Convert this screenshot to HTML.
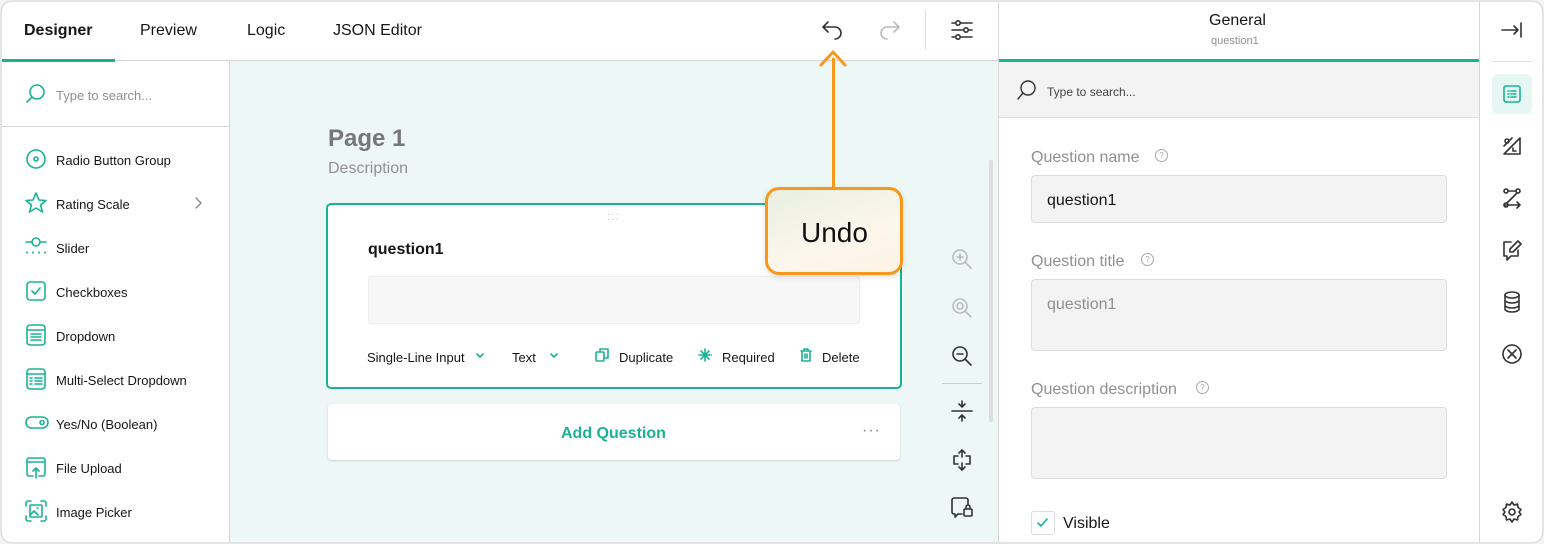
<!DOCTYPE html>
<html><head><meta charset="utf-8"><style>
*{box-sizing:border-box;margin:0;padding:0}
body{width:1544px;height:544px;background:#f3f3f3;font-family:"Liberation Sans","DejaVu Sans",sans-serif;position:relative;overflow:hidden}
.frame{position:absolute;left:0;top:0;width:1544px;height:544px;border-radius:12px;background:#fff;overflow:hidden}
.bord{position:absolute;left:0;top:0;width:1544px;height:544px;border:2px solid #e4e4e4;border-radius:12px;pointer-events:none}
.a{position:absolute}
.t{position:absolute;white-space:nowrap;color:#161616;transform:translateY(2px)}
svg{position:absolute;fill:none;stroke-linecap:round;stroke-linejoin:round}
.g{stroke:#19b394;stroke-width:1.6}
.k{stroke:#333;stroke-width:1.6}
.l{stroke:#bbb;stroke-width:1.6}
.item{position:absolute;left:56px;font-size:13px;color:#161616;transform:translateY(2px)}
</style></head><body><div class="frame">
<div class="a" style="left:0;top:60px;width:1479px;height:1px;background:#d6d6d6"></div>
<div class="a" style="left:0;top:59px;width:115px;height:3px;background:#19b394"></div>
<div class="t" style="left:24px;top:20px;font-size:16px;font-weight:bold">Designer</div>
<div class="t" style="left:140px;top:20px;font-size:16px">Preview</div>
<div class="t" style="left:247px;top:20px;font-size:16px">Logic</div>
<div class="t" style="left:333px;top:20px;font-size:16px">JSON Editor</div>
<svg style="left:820px;top:18px" width="26" height="24" class="k"><path d="M8 4 L3 9 L8 14 M3 9 H15 A6 6 0 0 1 15 21"/></svg>
<svg style="left:876px;top:18px" width="26" height="24" class="l"><path d="M18 4 L23 9 L18 14 M23 9 H11 A6 6 0 0 0 11 21"/></svg>
<div class="a" style="left:925px;top:10px;width:1px;height:40px;background:#ddd"></div>
<svg style="left:950px;top:18px" width="24" height="24" class="k"><path d="M2 5H22M2 12H22M2 19H22"/><circle cx="8" cy="5" r="2.2" fill="#fff"/><circle cx="16" cy="12" r="2.2" fill="#fff"/><circle cx="8" cy="19" r="2.2" fill="#fff"/></svg>
<div class="a" style="left:229px;top:61px;width:1px;height:483px;background:#d6d6d6"></div>
<div class="a" style="left:0;top:126px;width:229px;height:1px;background:#d6d6d6"></div>
<svg style="left:24px;top:82px" width="24" height="24" class="g"><circle cx="13" cy="10" r="7"/><path d="M8 15 L3 20"/></svg>
<div class="t" style="left:56px;top:86px;font-size:13px;color:#909090">Type to search...</div>
<svg style="left:25px;top:148px" width="22" height="22" class="g"><circle cx="11" cy="11" r="9"/><circle cx="11" cy="11" r="2"/></svg>
<div class="item" style="top:151px">Radio Button Group</div>
<svg style="left:24px;top:191px" width="24" height="24" class="g"><path d="M12 2L15 9L22 9.5L16.5 14L18.5 21L12 17L5.5 21L7.5 14L2 9.5L9 9Z"/></svg>
<div class="item" style="top:195px">Rating Scale</div>
<svg style="left:192px;top:196px" width="12" height="14" stroke="#888" stroke-width="1.3"><path d="M4 2L9 7L4 12"/></svg>
<svg style="left:24px;top:236px" width="24" height="22" class="g"><path d="M2 6H8M16 6H22"/><circle cx="12" cy="6" r="4"/><path d="M3 16v1M9 16v1M15 16v1M21 16v1"/></svg>
<div class="item" style="top:239px">Slider</div>
<svg style="left:25px;top:280px" width="22" height="22" class="g"><rect x="2" y="2" width="18" height="18" rx="3"/><path d="M7 11L10 14L15 8"/></svg>
<div class="item" style="top:283px">Checkboxes</div>
<svg style="left:25px;top:324px" width="22" height="22" class="g"><rect x="2" y="1" width="18" height="20" rx="3"/><path d="M2 6H20M6 10H16M6 13H16M6 16H16"/></svg>
<div class="item" style="top:327px">Dropdown</div>
<svg style="left:25px;top:368px" width="22" height="22" class="g"><rect x="2" y="1" width="18" height="20" rx="3"/><path d="M2 6H20M5 10H7M10 10H17M5 13H7M10 13H17M5 16H7M10 16H17"/></svg>
<div class="item" style="top:371px">Multi-Select Dropdown</div>
<svg style="left:24px;top:413px" width="26" height="20" class="g"><rect x="2" y="4" width="22" height="11" rx="5.5"/><circle cx="18" cy="9.5" r="2"/></svg>
<div class="item" style="top:415px">Yes/No (Boolean)</div>
<svg style="left:25px;top:456px" width="22" height="24" class="g"><path d="M8 20H4a2 2 0 0 1-2-2V4a2 2 0 0 1 2-2h14a2 2 0 0 1 2 2v14a2 2 0 0 1-2 2h-4M2 6H20M11 22V12M8 15L11 12L14 15"/></svg>
<div class="item" style="top:459px">File Upload</div>
<svg style="left:24px;top:499px" width="24" height="24" class="g"><path d="M2 7V4a2 2 0 0 1 2-2h3M17 2h3a2 2 0 0 1 2 2v3M22 17v3a2 2 0 0 1-2 2h-3M7 22H4a2 2 0 0 1-2-2v-3"/><rect x="6" y="6" width="12" height="12" rx="1"/><path d="M6 16L10 12L14 16M13 9h1"/></svg>
<div class="item" style="top:503px">Image Picker</div>
<div class="a" style="left:230px;top:61px;width:768px;height:483px;background:#edf7f5"></div>
<div class="a" style="left:998px;top:0;width:1px;height:544px;background:#d6d6d6"></div>
<div class="t" style="left:328px;top:123px;font-size:24px;font-weight:bold;color:#777">Page 1</div>
<div class="t" style="left:328px;top:158px;font-size:16px;color:#909090">Description</div>
<div class="a" style="left:326px;top:203px;width:576px;height:186px;background:#fff;border:2px solid #19b394;border-radius:5px"></div>
<div class="t" style="left:607px;top:210px;font-size:10px;color:#bbb;letter-spacing:1px;line-height:5px">···<br>···</div>
<div class="t" style="left:368px;top:239px;font-size:16px;font-weight:bold">question1</div>
<div class="a" style="left:368px;top:276px;width:492px;height:48px;background:#f7f7f7;border:1px solid #eee;border-radius:3px"></div>
<div class="t" style="left:367px;top:348px;font-size:13px">Single-Line Input</div>
<svg style="left:474px;top:350px" width="12" height="12" class="g"><path d="M3 4L6 7L9 4"/></svg>
<div class="t" style="left:512px;top:348px;font-size:13px">Text</div>
<svg style="left:548px;top:350px" width="12" height="12" class="g"><path d="M3 4L6 7L9 4"/></svg>
<svg style="left:594px;top:347px" width="16" height="16" class="g"><rect x="2" y="5" width="8" height="9" rx="1"/><path d="M6 5V2h8v9h-4"/></svg>
<div class="t" style="left:619px;top:348px;font-size:13px">Duplicate</div>
<svg style="left:697px;top:347px" width="16" height="16" class="g"><path d="M8 2V14M2 8H14M4 4L12 12M12 4L4 12"/></svg>
<div class="t" style="left:722px;top:348px;font-size:13px">Required</div>
<svg style="left:798px;top:347px" width="16" height="16" class="g"><path d="M3 4H13M6 4V2H10V4M4 4V14H12V4M7 7V11M9 7V11"/></svg>
<div class="t" style="left:822px;top:348px;font-size:13px">Delete</div>
<div class="a" style="left:328px;top:404px;width:572px;height:56px;background:#fff;border-radius:4px;box-shadow:0 1px 2px rgba(0,0,0,.15)"></div>
<div class="t" style="left:561px;top:423px;font-size:16px;font-weight:bold;color:#19b394">Add Question</div>
<div class="t" style="left:862px;top:420px;font-size:16px;color:#888;letter-spacing:1px">···</div>
<svg style="left:950px;top:247px" width="24" height="24" class="l"><circle cx="10" cy="10" r="7"/><path d="M15 15L21 21M10 7V13M7 10H13"/></svg>
<svg style="left:950px;top:296px" width="24" height="24" class="l"><circle cx="10" cy="10" r="7"/><path d="M15 15L21 21"/><circle cx="10" cy="10" r="3"/></svg>
<svg style="left:950px;top:344px" width="24" height="24" class="k"><circle cx="10" cy="10" r="7"/><path d="M15 15L21 21M7 10H13"/></svg>
<div class="a" style="left:942px;top:383px;width:40px;height:1px;background:#ccc"></div>
<svg style="left:950px;top:399px" width="24" height="24" class="k"><path d="M2 12H22M12 2V8M9 5L12 8L15 5M12 22V16M9 19L12 16L15 19"/></svg>
<svg style="left:950px;top:448px" width="24" height="24" class="k"><path d="M12 2V9M9 5L12 2L15 5M12 22V15M9 19L12 22L15 19M8 8H4V16H8M16 8H20V16H16"/></svg>
<svg style="left:950px;top:496px" width="26" height="24" class="k"><path d="M12 18H8L5 21V18H4a2 2 0 0 1-2-2V4a2 2 0 0 1 2-2h12a2 2 0 0 1 2 2v4"/><rect x="14" y="13" width="8" height="7" rx="1"/><path d="M16 13V11a2 2 0 0 1 4 0v2"/></svg>
<div class="a" style="left:989px;top:160px;width:4px;height:262px;background:#ddd;border-radius:2px"></div>
<div class="a" style="left:832px;top:58px;width:3px;height:130px;background:#f7981d"></div>
<svg style="left:818px;top:49px" width="32" height="20" stroke="#f7981d" stroke-width="3"><path d="M3 16L15 3L27 16"/></svg>
<div class="a" style="left:765px;top:187px;width:138px;height:88px;border:3px solid #f7981d;border-radius:14px;background:linear-gradient(160deg,#e8efe0,#fdf6ec 60%,#fdf3e6);box-shadow:0 2px 6px rgba(0,0,0,.12)"></div>
<div class="t" style="left:801px;top:215px;font-size:28px;color:#111">Undo</div>
<div class="t" style="left:1209px;top:10px;font-size:16px">General</div>
<div class="t" style="left:1211px;top:33px;font-size:11px;color:#909090">question1</div>
<div class="a" style="left:999px;top:59px;width:480px;height:3px;background:#19b394"></div>
<div class="a" style="left:999px;top:62px;width:480px;height:56px;background:#f3f3f3;border-bottom:1px solid #ddd"></div>
<svg style="left:1015px;top:78px" width="24" height="24" stroke="#333" stroke-width="1.4"><circle cx="13" cy="10" r="7"/><path d="M8 15L3 21"/></svg>
<div class="t" style="left:1047px;top:83px;font-size:12px;color:#444">Type to search...</div>
<div class="t" style="left:1031px;top:147px;font-size:16px;color:#909090">Question name</div>
<div class="a" style="left:1155px;top:149px;width:13px;height:13px;border:1px solid #aaa;border-radius:50%;font-size:8px;color:#aaa;text-align:center;line-height:11px">?</div>
<div class="a" style="left:1031px;top:175px;width:416px;height:48px;background:#f3f3f3;border:1px solid #ddd;border-radius:4px"></div>
<div class="t" style="left:1047px;top:190px;font-size:16px">question1</div>
<div class="t" style="left:1031px;top:251px;font-size:16px;color:#909090">Question title</div>
<div class="a" style="left:1141px;top:253px;width:13px;height:13px;border:1px solid #aaa;border-radius:50%;font-size:8px;color:#aaa;text-align:center;line-height:11px">?</div>
<div class="a" style="left:1031px;top:279px;width:416px;height:72px;background:#f3f3f3;border:1px solid #ddd;border-radius:4px"></div>
<div class="t" style="left:1047px;top:294px;font-size:16px;color:#909090">question1</div>
<div class="t" style="left:1031px;top:379px;font-size:16px;color:#909090">Question description</div>
<div class="a" style="left:1196px;top:381px;width:13px;height:13px;border:1px solid #aaa;border-radius:50%;font-size:8px;color:#aaa;text-align:center;line-height:11px">?</div>
<div class="a" style="left:1031px;top:407px;width:416px;height:72px;background:#f3f3f3;border:1px solid #ddd;border-radius:4px"></div>
<div class="a" style="left:1031px;top:511px;width:24px;height:24px;border:1px solid #ddd;border-radius:3px;background:#fff"></div>
<svg style="left:1035px;top:515px" width="16" height="16" class="g"><path d="M3 8L6 11L12 4"/></svg>
<div class="t" style="left:1063px;top:513px;font-size:16px">Visible</div>
<div class="a" style="left:1479px;top:0;width:1px;height:544px;background:#d6d6d6"></div>
<svg style="left:1500px;top:18px" width="24" height="24" class="k"><path d="M2 12H18M14 8L18 12L14 16M21 5V19"/></svg>
<div class="a" style="left:1492px;top:61px;width:40px;height:1px;background:#ddd"></div>
<div class="a" style="left:1492px;top:74px;width:40px;height:40px;background:#e6f7f3;border-radius:6px"></div>
<svg style="left:1502px;top:84px" width="20" height="20" class="g"><rect x="2" y="2" width="16" height="16" rx="2"/><path d="M6 7h1M9 7h5M6 10h1M9 10h5M6 13h1M9 13h5"/></svg>
<svg style="left:1500px;top:134px" width="24" height="24" class="k"><path d="M4 20L20 4V20Z M13 14v3h3"/><circle cx="7" cy="7" r="2"/><path d="M4 12L12 4"/></svg>
<svg style="left:1500px;top:186px" width="24" height="24" class="k"><circle cx="6" cy="5" r="2"/><circle cx="18" cy="5" r="2"/><path d="M8 5H16M17 7L7 17M4 19H20M17 16L20 19L17 22"/><circle cx="6" cy="19" r="2"/></svg>
<svg style="left:1500px;top:238px" width="24" height="24" class="k"><path d="M11 4H4V18H7V22L11 18H18V12"/><path d="M18 3L21 6L13 14H10V11Z"/></svg>
<svg style="left:1500px;top:290px" width="24" height="24" class="k"><ellipse cx="12" cy="5" rx="7" ry="3"/><path d="M5 5V19c0 1.7 3.1 3 7 3s7-1.3 7-3V5M5 10c0 1.7 3.1 3 7 3s7-1.3 7-3M5 15c0 1.7 3.1 3 7 3s7-1.3 7-3"/></svg>
<svg style="left:1500px;top:342px" width="24" height="24" class="k"><circle cx="12" cy="12" r="9"/><path d="M8 8L16 16M16 8L8 16"/></svg>
<svg style="left:1500px;top:500px" width="24" height="24" class="k"><circle cx="12" cy="12" r="3"/><path d="M12 2l2 3 3.5-1 .5 3.5 3 2-2 2.5 2 2.5-3 2-.5 3.5-3.5-1-2 3-2-3-3.5 1-.5-3.5-3-2 2-2.5-2-2.5 3-2 .5-3.5 3.5 1z"/></svg>
</div><div class="bord"></div></body></html>
